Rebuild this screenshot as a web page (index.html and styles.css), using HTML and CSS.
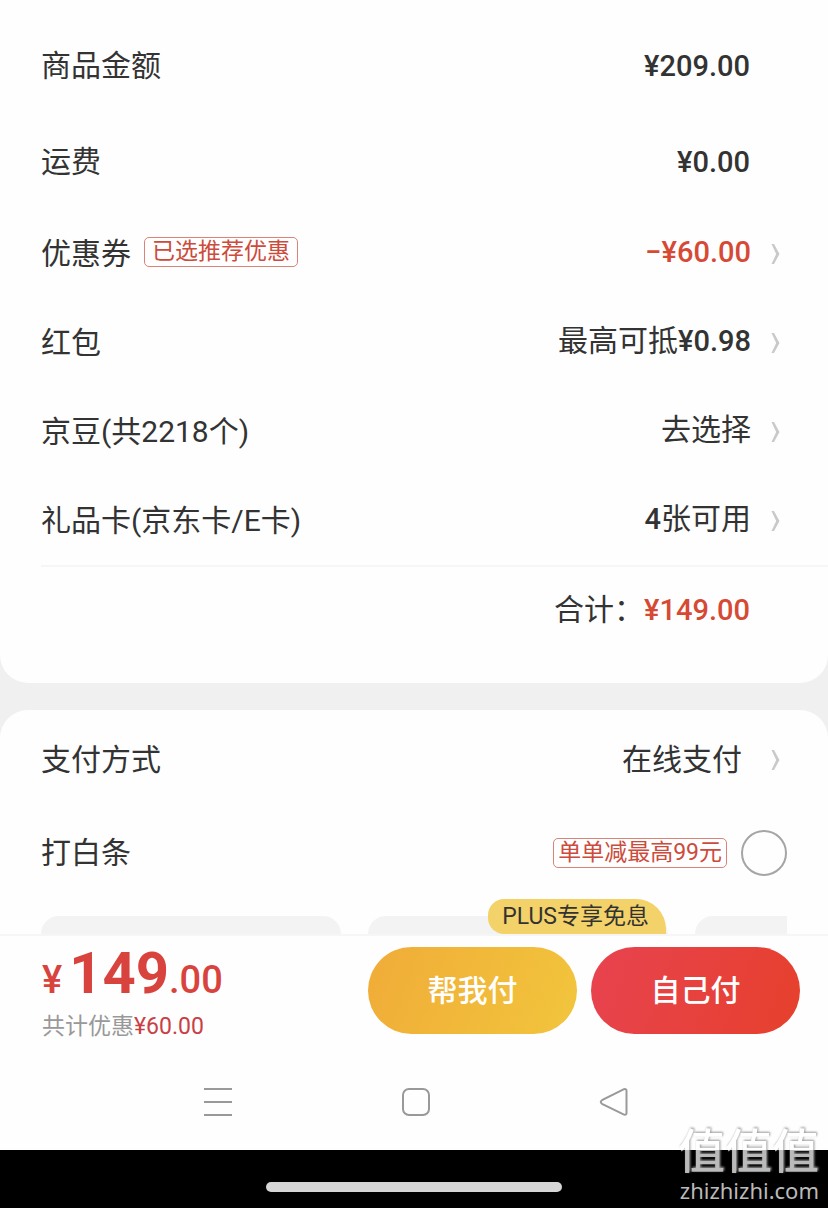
FILE: index.html
```html
<!DOCTYPE html>
<html lang="zh-CN">
<head>
<meta charset="utf-8">
<meta name="viewport" content="width=device-width, initial-scale=1">
<title>确认订单</title>
<link rel="stylesheet" href="styles.css">
</head>
<body>
<svg class="defs" aria-hidden="true"><symbol id="chevron" viewBox="0 0 10 22"><path d="M1.5 1 L4 1 L9.5 11 L4 21 L1.5 21 L6.2 11 Z"/></symbol></svg>
<main class="content">
  <section class="card card-amounts">
    <div class="row row-tall"><span class="label">商品金额</span><span class="value plain price">¥209.00</span></div>
    <div class="row row-tall"><span class="label">运费</span><span class="value plain price">¥0.00</span></div>
    <div class="row"><span class="label">优惠券</span><span class="tag tag-coupon">已选推荐优惠</span><button class="value link-value price red"><span class="link-text">−¥60.00</span><svg class="chevron"><use href="#chevron"/></svg></button></div>
    <div class="row"><span class="label">红包</span><button class="value link-value"><span class="link-text">最高可抵<span class="price">¥0.98</span></span><svg class="chevron"><use href="#chevron"/></svg></button></div>
    <div class="row"><span class="label">京豆(共2218个)</span><button class="value link-value"><span class="link-text">去选择</span><svg class="chevron"><use href="#chevron"/></svg></button></div>
    <div class="row"><span class="label">礼品卡(京东卡/E卡)</span><button class="value link-value"><span class="link-text"><span class="price">4</span>张可用</span><svg class="chevron"><use href="#chevron"/></svg></button></div>
    <div class="row row-total"><span class="value">合计：</span><span class="plain price red">¥149.00</span></div>
  </section>
  <section class="card card-pay">
    <div class="row row-method"><span class="label">支付方式</span><button class="value link-value method">在线支付<svg class="chevron"><use href="#chevron"/></svg></button></div>
    <div class="row row-credit"><label class="label" for="credit">打白条</label><span class="tag tag-credit">单单减最高99元</span><input class="radio" type="radio" id="credit" name="pay"></div>
    <div class="plans">
      <div class="plan"></div>
      <div class="plan"><span class="plus">PLUS专享免息</span></div>
      <div class="plan plan-cut"></div>
    </div>
  </section>
</main>
<footer class="checkout">
  <div class="sum">
    <div class="sum-main"><span class="sum-small sum-sign">¥</span>149<span class="sum-small">.00</span></div>
    <div class="sum-sub">共计优惠<span class="saved">¥60.00</span></div>
  </div>
  <button class="pay pay-friend">帮我付</button>
  <button class="pay pay-self">自己付</button>
</footer>
<nav class="system">
  <button class="key" aria-label="菜单"><svg class="key-icon" viewBox="0 0 30 30"><path d="M1 2H29M1 15H29M1 28H29"/></svg></button>
  <button class="key" aria-label="主页"><svg class="key-icon" viewBox="0 0 30 30"><rect x="2" y="2" width="26" height="26" rx="6"/></svg></button>
  <button class="key" aria-label="返回"><svg class="key-icon" viewBox="0 0 30 30"><path d="M25 2.2 L3 13.2 Q0.5 15 3 16.8 L25 27.6 Q27.5 28.2 27.5 26 V4 Q27.5 1.5 25 2.2Z"/></svg></button>
</nav>
<div class="home-area">
  <div class="home-bar"></div>
  <div class="watermark"><div class="mark-logo">值值值</div><div class="mark-url">zhizhizhi.com</div></div>
</div>
</body>
</html>
```
FILE: styles.css
```css
* { box-sizing: border-box; }
body {
  margin: 0;
  min-height: 100vh;
  display: flex;
  flex-direction: column;
  background: #fefefe;
  color: #333;
  font-family: Roboto, "Noto Sans CJK SC", sans-serif;
  font-size: 30px;
  line-height: 40px;
}
button { font: inherit; color: inherit; background: none; border: 0; padding: 0; }
.defs { position: absolute; width: 0; height: 0; }
.content { background: #f0f0f0; display: flex; flex-direction: column; gap: 27px; }
.card { background: #fefefe; }
.card-amounts { padding: 18px 0 30px; border-radius: 0 0 28px 28px; }
.card-pay { border-radius: 28px 28px 0 0; }
.row { display: flex; align-items: center; height: 89px; padding: 0 48px 0 41px; }
.row-tall { height: 96px; }
.row:nth-child(3) { height: 88px; }
.row-total { height: 88px; margin-left: 41px; padding-left: 0; border-top: 2px solid #f6f6f6; }
.row-method { height: 99px; }
.row-credit { height: 88px; padding-right: 41px; }
.value { margin-left: auto; }
.plain { margin-right: 30px; }
.price { font-weight: 500; font-size: 29px; }
.red { color: #d64a35; }
.link-value { display: flex; align-items: center; gap: 19px; }
.link-text { padding-bottom: 4px; }
.method { gap: 28px; }
.chevron { width: 10px; height: 22px; fill: #c9c9c9; }
.tag { border: 1px solid #d98478; border-radius: 5px; color: #cc4b3c; font-size: 23px; line-height: 28px; }
.tag-coupon { margin: 0 0 4px 13px; padding: 0 7px; }
.tag-credit { margin-left: auto; padding: 0 4px; }
.radio { appearance: none; width: 46px; height: 46px; margin: 0 0 0 14px; border: 2px solid #a5a5a5; border-radius: 50%; }
.plans { display: flex; gap: 27px; padding: 19px 41px 0; }
.plan { position: relative; flex: 0 0 300px; height: 18px; background: #f3f3f3; border-radius: 20px 20px 0 0; }
.plan-cut { flex: 1; border-radius: 20px 0 0 0; }
.plus { position: absolute; right: 2px; bottom: 0; padding: 0 17px 0 14px; border-radius: 16px 30px 0 16px; background: #f3d269; font-size: 23px; line-height: 35px; white-space: nowrap; }
.checkout { display: flex; align-items: flex-start; gap: 14px; padding: 11px 28px 20px 42px; border-top: 2px solid #f6f6f6; }
.sum { flex: 1; }
.sum-main { color: #d8433d; font-size: 58px; line-height: 52px; font-weight: 700; }
.sum-small { font-size: 38px; font-weight: 500; }
.sum-sign { margin-right: 7px; }
.sum-sub { padding-top: 4px; color: #999; font-size: 23px; line-height: 34px; }
.saved { color: #c93f45; }
.pay { width: 209px; height: 87px; border-radius: 44px; color: #fff; font-weight: 500; }
.pay-friend { background: linear-gradient(110deg, #f0ac38, #f2c53c); }
.pay-self { background: linear-gradient(110deg, #e84350, #e6402c); }
.system { flex: 1; display: flex; justify-content: center; align-items: center; gap: 168px; padding: 0 0 10px 4px; }
.key { display: flex; }
.key-icon { width: 30px; height: 30px; fill: none; stroke: #999; stroke-width: 2; }
.home-area { position: relative; height: 58px; padding-top: 32px; background: #000; }
.home-bar { width: 296px; height: 10px; margin: 0 auto; border-radius: 5px; background: #d6d6d6; }
.watermark { position: absolute; right: 9px; bottom: 4px; color: #bababa; text-align: right; }
.mark-logo { font-size: 47px; line-height: 48px; font-weight: 500; background: linear-gradient(#fff 22px, #bababa 22px); background-clip: text; color: transparent; filter: drop-shadow(1px -1px 1px #999); }
.mark-url { font-family: "Noto Sans", sans-serif; font-size: 22px; line-height: 28px; }
```
